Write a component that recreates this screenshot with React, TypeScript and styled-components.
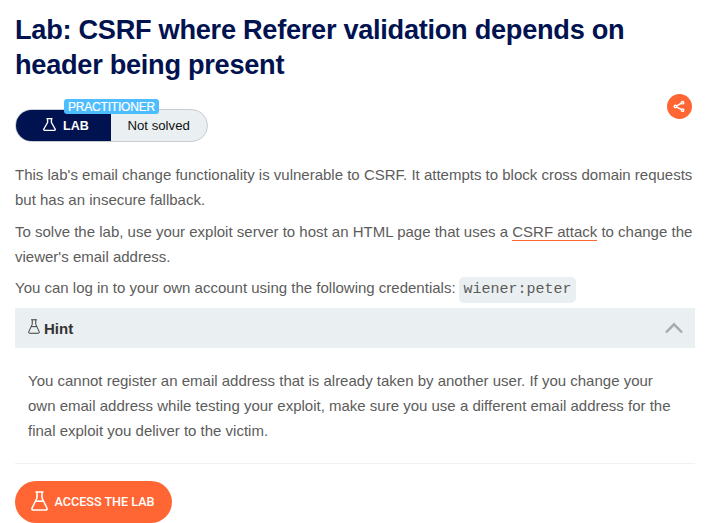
import React from "react";
import styled, { createGlobalStyle } from "styled-components";

const GlobalStyle = createGlobalStyle`
  * { box-sizing: border-box; }
  html, body { margin: 0; background: #fff; overflow: hidden; }
  body { font-family: "Liberation Sans", Arial, sans-serif; color: #5c5c5b; }
`;

const Page = styled.main`
  width: 716px;
  height: 523px;
  padding: 12px 21px 0 15px;
  overflow: hidden;
`;

const Title = styled.h1`
  margin: 0;
  font-size: 27.2px;
  line-height: 35px;
  letter-spacing: -0.29px;
  font-weight: 700;
  color: #00124f;
  white-space: nowrap;
`;

const StatusRow = styled.div`
  display: flex;
  align-items: flex-start;
  justify-content: space-between;
  padding: 12px 3px 0 0;
  height: 80px;
`;

const StatusPill = styled.div`
  position: relative;
  display: flex;
  width: 193px;
  height: 33px;
  margin-top: 15px;
  border: 1px solid #c8cccf;
  border-radius: 17px;
  background: #eaeff2;
`;

const LabSide = styled.div`
  display: flex;
  align-items: center;
  width: 95px;
  padding-left: 27px;
  gap: 7px;
  border-radius: 16px 0 0 16px;
  background: #00124f;
  color: #fff;
  font-size: 12.5px;
  font-weight: 700;
`;

const StateSide = styled.div`
  padding-left: 16.5px;
  line-height: 31px;
  font-size: 13.2px;
  color: #111;
  white-space: nowrap;
`;

const LevelBadge = styled.span`
  position: absolute;
  left: 48px;
  top: -11px;
  width: 95px;
  height: 15px;
  border-radius: 3px;
  background: #4dbdff;
  color: #fff;
  font-size: 12px;
  letter-spacing: -0.2px;
  line-height: 16px;
  text-align: center;
  white-space: nowrap;
  -webkit-text-stroke: 0.2px #fff;
`;

const ShareButton = styled.button`
  display: flex;
  align-items: center;
  justify-content: center;
  width: 25px;
  height: 25px;
  padding: 0;
  border: 0;
  border-radius: 50%;
  background: #ff6633;
`;

const Paragraph = styled.p`
  margin: 0 0 6.5px;
  font-size: 15px;
  line-height: 25px;
  white-space: nowrap;
`;

const TopicLink = styled.a`
  color: inherit;
  text-decoration: none;
  border-bottom: 1px solid #ff6633;
`;

const Credentials = styled.code`
  display: inline-block;
  padding: 0 4px 0 4.5px;
  height: 26px;
  line-height: 26px;
  border-radius: 5px;
  background: #eaeff2;
  font-family: "Liberation Mono", "Courier New", monospace;
  font-size: 15px;
`;

const CredentialsLine = styled(Paragraph)`
  display: flex;
  gap: 3.5px;
  height: 33px;
  margin: 0;
  ${Credentials} { margin-top: 2px; }
`;

const HintBar = styled.div`
  display: flex;
  align-items: center;
  width: 680px;
  height: 40px;
  padding: 0 12px 0 13px;
  background: #eaeff2;
  color: #333332;
  font-size: 15px;
  font-weight: 700;
  gap: 4px;
`;

const HintLabel = styled.span`
  flex: 1;
`;

const HintBody = styled.div`
  width: 680px;
  height: 116px;
  padding: 20px 13px 0;
  border-bottom: 1px solid #f0f1f2;
`;

const AccessButton = styled.button`
  display: flex;
  align-items: center;
  width: 157px;
  height: 42px;
  margin-top: 17px;
  padding: 0 0 2px 16px;
  gap: 6.5px;
  border: 0;
  border-radius: 21px;
  background: #ff6633;
  color: #fff;
  font-family: Roboto, "Liberation Sans", sans-serif;
  font-size: 12.6px;
  font-weight: 500;
  white-space: nowrap;
`;

const FlaskSvg = styled.svg<{ $lift?: number }>`
  display: block;
  flex: none;
  margin-bottom: ${(p) => p.$lift ?? 0}px;
`;

type FlaskProps = { width: number; height: number; stroke: number; lift?: number; filled?: boolean };

const Flask = ({ width, height, stroke, lift, filled }: FlaskProps) => (
  <FlaskSvg $lift={lift} width={width} height={height} viewBox="0 0 17 20" preserveAspectRatio="none" fill="none" stroke="currentColor" strokeWidth={stroke} strokeLinejoin="round">
    <path d="M4.5 1H12.5M6 1.2V7L1.1 17Q.4 19 2.4 19H14.6Q16.6 19 15.9 17L11 7V1.2" />
    {filled && <path d="M4.6 10.2H12.4" />}
  </FlaskSvg>
);

const App = () => (
  <>
    <GlobalStyle />
    <Page>
      <Title>Lab: CSRF where Referer validation depends on<br />header being present</Title>
      <StatusRow>
        <StatusPill>
          <LabSide><Flask width={13} height={13} stroke={1.8} lift={2} />LAB</LabSide>
          <StateSide>Not solved</StateSide>
          <LevelBadge>PRACTITIONER</LevelBadge>
        </StatusPill>
        <ShareButton aria-label="Share">
          <svg width="13" height="13" viewBox="0 0 13 13" fill="none" stroke="#fff" strokeWidth="1.4">
            <path d="M3.6 5.8 8.2 3.4M3.6 7.1 8.2 9.4" />
            <circle cx="2.4" cy="6.4" r="1.2" />
            <circle cx="9.6" cy="2.7" r="1.2" />
            <circle cx="9.6" cy="10.2" r="1.2" />
          </svg>
        </ShareButton>
      </StatusRow>
      <Paragraph>This lab's email change functionality is vulnerable to CSRF. It attempts to block cross domain requests<br />but has an insecure fallback.</Paragraph>
      <Paragraph>To solve the lab, use your exploit server to host an HTML page that uses a <TopicLink>CSRF attack</TopicLink> to change the<br />viewer's email address.</Paragraph>
      <CredentialsLine as="div"><span>You can log in to your own account using the following credentials:</span><Credentials>wiener:peter</Credentials></CredentialsLine>
      <HintBar>
        <Flask width={12} height={15} stroke={1.3} lift={3} filled />
        <HintLabel>Hint</HintLabel>
        <svg width="18" height="12" viewBox="0 0 18 12" fill="none" stroke="#aaa" strokeWidth="2.5">
          <path d="M1 10.5 9 2.3 17 10.5" />
        </svg>
      </HintBar>
      <HintBody>
        <Paragraph>You cannot register an email address that is already taken by another user. If you change your<br />own email address while testing your exploit, make sure you use a different email address for the<br />final exploit you deliver to the victim.</Paragraph>
      </HintBody>
      <AccessButton><Flask width={17} height={20} stroke={1.6} filled />ACCESS THE LAB</AccessButton>
    </Page>
  </>
);

export default App;
